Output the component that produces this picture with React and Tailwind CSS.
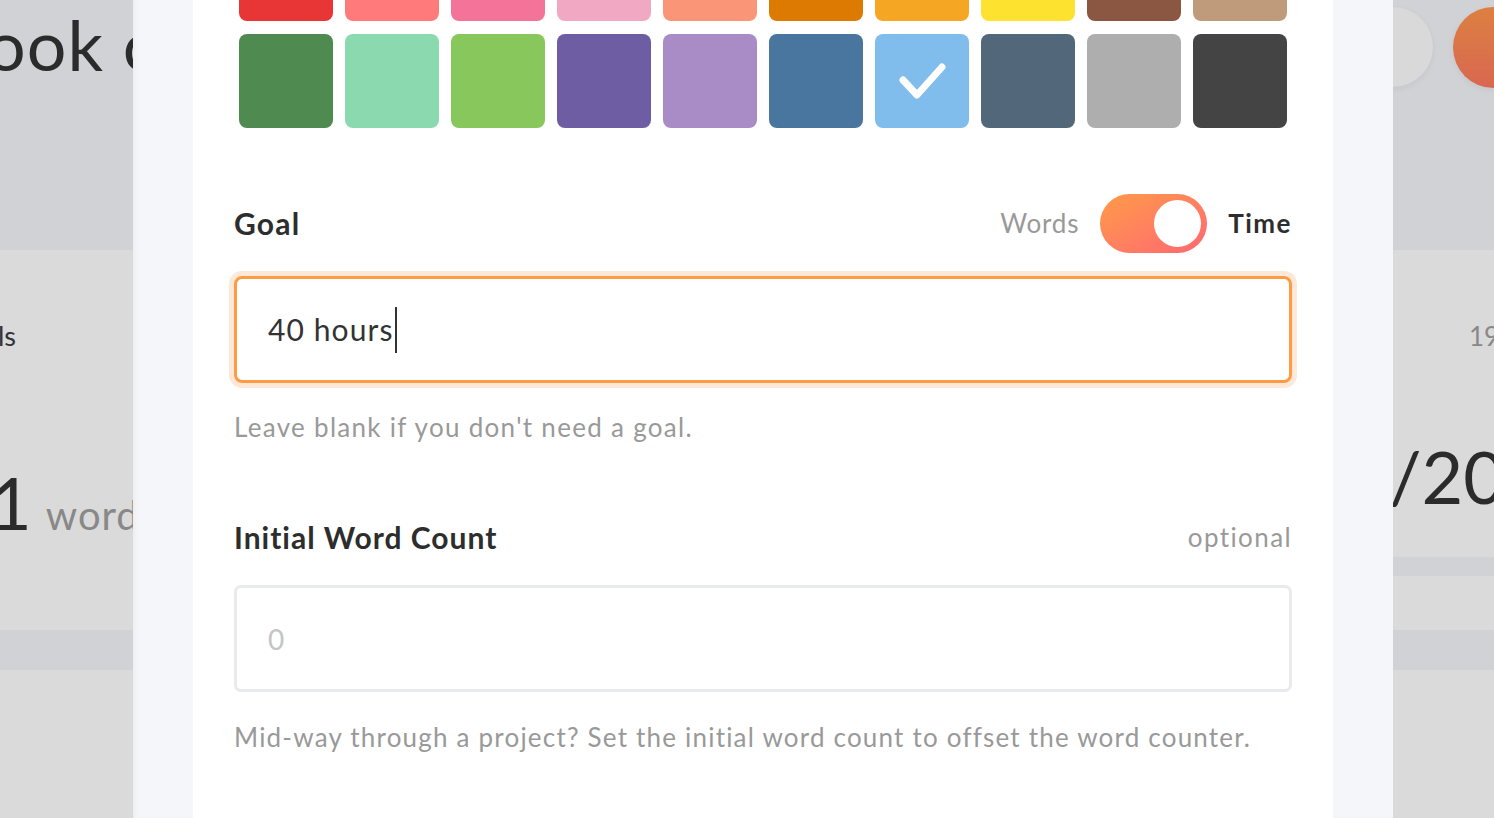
import React from "react";

const top = ["#e83535", "#ff7b7b", "#f37399", "#f1a8c2", "#fb9578", "#dd7a02", "#f5a623", "#fde22f", "#8b5742", "#bf9b7b"];
const bottom = ["#4f8b51", "#8bdaaf", "#87c75b", "#6e5da3", "#a98bc6", "#48769e", "#80bcec", "#526779", "#aeaeae", "#444444"];

function Swatch({ color, selected }) {
  return (
    <div className="h-[94px] w-[94px] rounded-[8px] flex items-center justify-center" style={{ backgroundColor: color }}>
      {selected && (
        <svg width="94" height="94" viewBox="0 0 94 94">
          <path d="M28 46 L42 61 L67 33" fill="none" stroke="#fff" strokeWidth="7" strokeLinecap="round" strokeLinejoin="round" />
        </svg>
      )}
    </div>
  );
}

export default function App() {
  return (
    <div className="flex h-[818px] w-[1494px] overflow-hidden" style={{ fontFamily: "Lato, 'Noto Sans', sans-serif" }}>
      {/* left background */}
      <div className="flex w-[133px] shrink-0 flex-col overflow-hidden">
        <div className="h-[250px] bg-[#d1d2d5] pt-[4px]">
          <div className="ml-[-14px] whitespace-nowrap text-[70px] leading-[80px] tracking-[1px] text-[#2b2b2b]">ook chapter</div>
        </div>
        <div className="h-[380px] bg-[#dadada]">
          <div className="mt-[68px] ml-[-2px] whitespace-nowrap text-[27px] leading-[36px] text-[#333]">ls</div>
          <div className="mt-[108px] ml-[-10px] flex items-baseline gap-[14px] whitespace-nowrap">
            <span className="text-[72px] leading-[80px] text-[#2b2b2b]">1</span>
            <span className="text-[40px] tracking-[1px] text-[#888]">words</span>
          </div>
        </div>
        <div className="h-[40px] bg-[#d1d2d5]" />
        <div className="flex-1 bg-[#dadada]" />
      </div>

      {/* modal */}
      <div className="flex w-[1260px] shrink-0 bg-[#f4f6fa] px-[60px] shadow-[inset_4px_0_4px_-2px_rgba(0,0,0,0.04)]">
        <div className="flex w-full flex-col bg-white px-[41px]">
          <div className="mt-[-73px] grid grid-cols-[repeat(10,94px)] gap-x-[12px] gap-y-[13px] px-[5px]">
            {top.map((c) => (
              <Swatch key={c} color={c} />
            ))}
            {bottom.map((c) => (
              <Swatch key={c} color={c} selected={c === "#80bcec"} />
            ))}
          </div>

          <div className="mt-[66px] flex h-[59px] items-center justify-between">
            <div className="text-[30px] font-bold tracking-[1.2px] text-[#2d2d2d]">Goal</div>
            <div className="flex items-center gap-[21px]">
              <span className="text-[26px] tracking-[0.8px] text-[#999]">Words</span>
              <div className="flex h-[59px] w-[107px] items-center justify-end rounded-full bg-gradient-to-br from-[#ff9a45] to-[#ff6670] pr-[6px]">
                <div className="h-[47px] w-[47px] rounded-full bg-white" />
              </div>
              <span className="text-[26px] font-bold tracking-[1.5px] text-[#2d2d2d]">Time</span>
            </div>
          </div>

          <div className="mt-[23px] flex h-[107px] items-center rounded-[8px] border-[3px] border-[#ff9b45] pl-[31px] shadow-[0_0_0_5px_#fee9d8]">
            <span className="text-[30px] tracking-[1.1px] text-[#333]">40 hours</span>
            <span className="ml-[1px] h-[46px] w-[2px] bg-[#333]" />
          </div>

          <div className="mt-[26px] text-[26px] leading-[36px] tracking-[1.3px] text-[#999]">Leave blank if you don't need a goal.</div>

          <div className="mt-[74px] flex h-[36px] items-center justify-between">
            <div className="text-[30px] font-bold tracking-[1px] text-[#2d2d2d]">Initial Word Count</div>
            <div className="text-[26px] tracking-[1.4px] text-[#999]">optional</div>
          </div>

          <div className="mt-[30px] flex h-[107px] items-center rounded-[7px] border-[3px] border-[#e9eaee] pl-[31px]">
            <span className="text-[28px] text-[#c4c4c4]">0</span>
          </div>

          <div className="mt-[27px] whitespace-nowrap text-[26px] leading-[36px] tracking-[1.2px] text-[#999]">
            Mid-way through a project? Set the initial word count to offset the word counter.
          </div>
        </div>
      </div>

      {/* right background */}
      <div className="flex flex-1 flex-col overflow-hidden">
        <div className="relative h-[250px] bg-[#d1d2d5]">
          <div className="absolute left-[-40px] top-[7px] h-[80px] w-[80px] rounded-full bg-[#d9d9d9] shadow-[0_2px_6px_rgba(0,0,0,0.06)]" />
          <div className="absolute left-[60px] top-[7px] h-[81px] w-[81px] rounded-full bg-gradient-to-b from-[#dc8040] to-[#d96750] shadow-[0_2px_6px_rgba(0,0,0,0.06)]" />
        </div>
        <div className="h-[380px] bg-[#dadada]">
          <div className="mt-[68px] ml-[76px] whitespace-nowrap text-[26px] leading-[36px] text-[#888]">19</div>
          <div className="mt-[82px] ml-[-4px] whitespace-nowrap text-[72px] leading-[80px] text-[#2b2b2b]">/20</div>
          <div className="mt-[41px] h-[19px] bg-[#d1d2d5]" />
        </div>
        <div className="h-[40px] bg-[#d1d2d5]" />
        <div className="flex-1 bg-[#dadada]" />
      </div>
    </div>
  );
}
